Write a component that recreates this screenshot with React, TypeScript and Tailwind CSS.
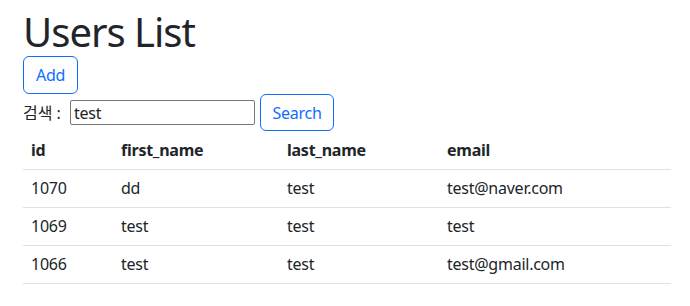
import { useState } from 'react';

const users = [
  { id: 1070, first_name: 'dd', last_name: 'test', email: 'test@naver.com' },
  { id: 1069, first_name: 'test', last_name: 'test', email: 'test' },
  { id: 1066, first_name: 'test', last_name: 'test', email: 'test@gmail.com' },
];

export default function App() {
  const [keyword, setKeyword] = useState('test');

  return (
    <div className="min-h-[306px] bg-white pt-2 pl-[23px] text-[16px] tracking-[-0.25px] text-[#212529] font-['Noto_Sans','Noto_Sans_CJK_KR',sans-serif]">
      <div className="w-[648px]">
        <h1 className="text-[40px] leading-[48px] font-normal tracking-[-1px]">Users List</h1>

        {/* 추가 버튼 */}
        <button className="h-[38px] px-3 border border-[#0d6efd] rounded-md text-[#0d6efd] leading-6">
          Add
        </button>

        {/* 검색 */}
        <div className="flex items-center h-[37px]">
          <span className="w-[47px] tracking-normal">검색 :</span>
          <input
            type="text"
            value={keyword}
            onChange={(e) => setKeyword(e.target.value)}
            className="w-[185px] h-[25px] px-[3px] border border-[#767676] rounded-[2px] text-[16px] leading-none focus:outline-none"
          />
          <button className="ml-[5px] h-[37px] w-[74px] border border-[#0d6efd] rounded-md text-[#0d6efd] leading-6">
            Search
          </button>
        </div>

        <table className="w-full border-collapse text-left">
          <thead>
            <tr className="border-b border-[#dee2e6]">
              <th className="w-[90px] h-[38px] px-2 font-bold">id</th>
              <th className="w-[166px] px-2 font-bold">first_name</th>
              <th className="w-[160px] px-2 font-bold">last_name</th>
              <th className="px-2 font-bold">email</th>
            </tr>
          </thead>
          <tbody>
            {users.map((u) => (
              <tr key={u.id} className="border-b border-[#dee2e6]">
                <td className="h-[38px] px-2">{u.id}</td>
                <td className="px-2">{u.first_name}</td>
                <td className="px-2">{u.last_name}</td>
                <td className="px-2">{u.email}</td>
              </tr>
            ))}
          </tbody>
        </table>
      </div>
    </div>
  );
}
